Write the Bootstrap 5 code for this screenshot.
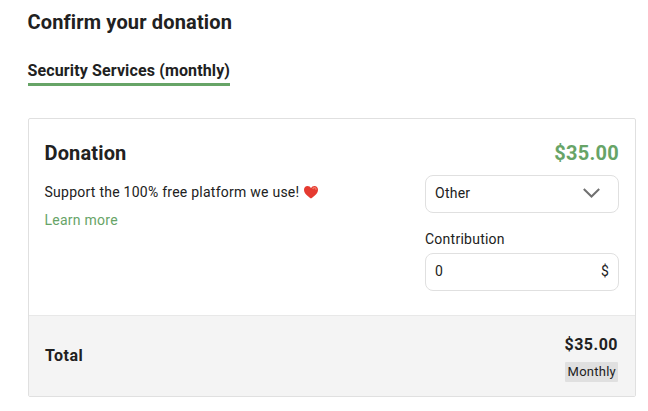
<!DOCTYPE html>
<html lang="en">
<head>
<meta charset="utf-8">
<meta name="viewport" content="width=device-width, initial-scale=1">
<title>Confirm your donation</title>
<link href="https://cdn.jsdelivr.net/npm/bootstrap@5.3.0/dist/css/bootstrap.min.css" rel="stylesheet">
<style>
body{font-family:Roboto,sans-serif;color:#212121;font-size:14px;line-height:20px;letter-spacing:.25px;overflow:hidden}
.page{padding:8px 12px 0 27.5px}
.title{font-size:20px;line-height:28px;font-weight:700;letter-spacing:.15px}
.price{letter-spacing:.25px}
.tab-label{font-size:16px;line-height:24px;font-weight:700;letter-spacing:.13px;border-bottom:3px solid #67a467;margin-top:23px}
.panel{margin:32px 0 0 .5px;border:1px solid #e0e0e0;border-radius:2px;height:279px}
.panel-main{height:196px;padding:20px 16px 0 15.5px}
.panel-total{height:81px;padding:0 17px 0 16px;background:#f4f4f4;border-top:1px solid #e8e8e8}
.green{color:#67a467}
.side{width:194px}
.field{height:38px;border:1px solid #e0e0e0;border-radius:8px;padding:0 9px 2px}
.select-field{padding-right:18px}
.message{margin-top:15px}
.more{margin-top:8px}
.monthly{background:#e0e0e0;font-size:13px;line-height:20px;padding:0 2px 0 3px;border-radius:1px;margin-top:5px}
.amount{font-size:16px;line-height:24px;letter-spacing:.5px}
.total-side{margin-top:2px}
</style>
</head>
<body>
<main class="page">
<h1 class="title mb-0">Confirm your donation</h1>
<div class="tab-label d-inline-block">Security Services (monthly)</div>
<section class="panel d-flex flex-column">
<div class="panel-main flex-grow-1 d-flex justify-content-between">
<div>
<h2 class="title mb-0">Donation</h2>
<p class="message mb-0 d-flex align-items-center">Support the 100% free platform we use!
<svg class="ms-1" width="16" height="14" viewBox="0 0 16 14" aria-hidden="true"><path d="M8 13.5C5 11.4 1 8.5 1 4.7 1 2.4 2.6 1 4.5 1 6.1 1 7.3 1.9 8 3.2 8.7 1.9 9.9 1 11.5 1 13.4 1 15 2.4 15 4.7 15 8.5 11 11.4 8 13.5Z" fill="#e53a30"/><path d="M10 3.5C11 2 13 2.5 13 4.2" fill="none" stroke="#f37b69" stroke-width="1.4" stroke-linecap="round"/></svg></p>
<a class="more green d-inline-block text-decoration-none" href="#">Learn more</a>
</div>
<div class="side">
<div class="title price green text-end">$35.00</div>
<div class="field select-field d-flex align-items-center justify-content-between mt-2">Other
<svg width="17" height="10" viewBox="0 0 17 10" fill="none" stroke="#707070" stroke-width="2" aria-hidden="true"><path d="M.8 1 8.5 8.5 16.2 1"/></svg></div>
<label class="d-block mt-3 pb-1" for="amount-field">Contribution</label>
<div id="amount-field" class="field d-flex align-items-center justify-content-between"><span>0</span><span>$</span></div>
</div>
</div>
<div class="panel-total d-flex align-items-center justify-content-between">
<strong class="amount">Total</strong>
<div class="total-side d-flex flex-column align-items-end"><strong class="amount">$35.00</strong><span class="monthly">Monthly</span></div>
</div>
</section>
</main>
<script src="https://cdn.jsdelivr.net/npm/bootstrap@5.3.0/dist/js/bootstrap.bundle.min.js"></script>
</body>
</html>
